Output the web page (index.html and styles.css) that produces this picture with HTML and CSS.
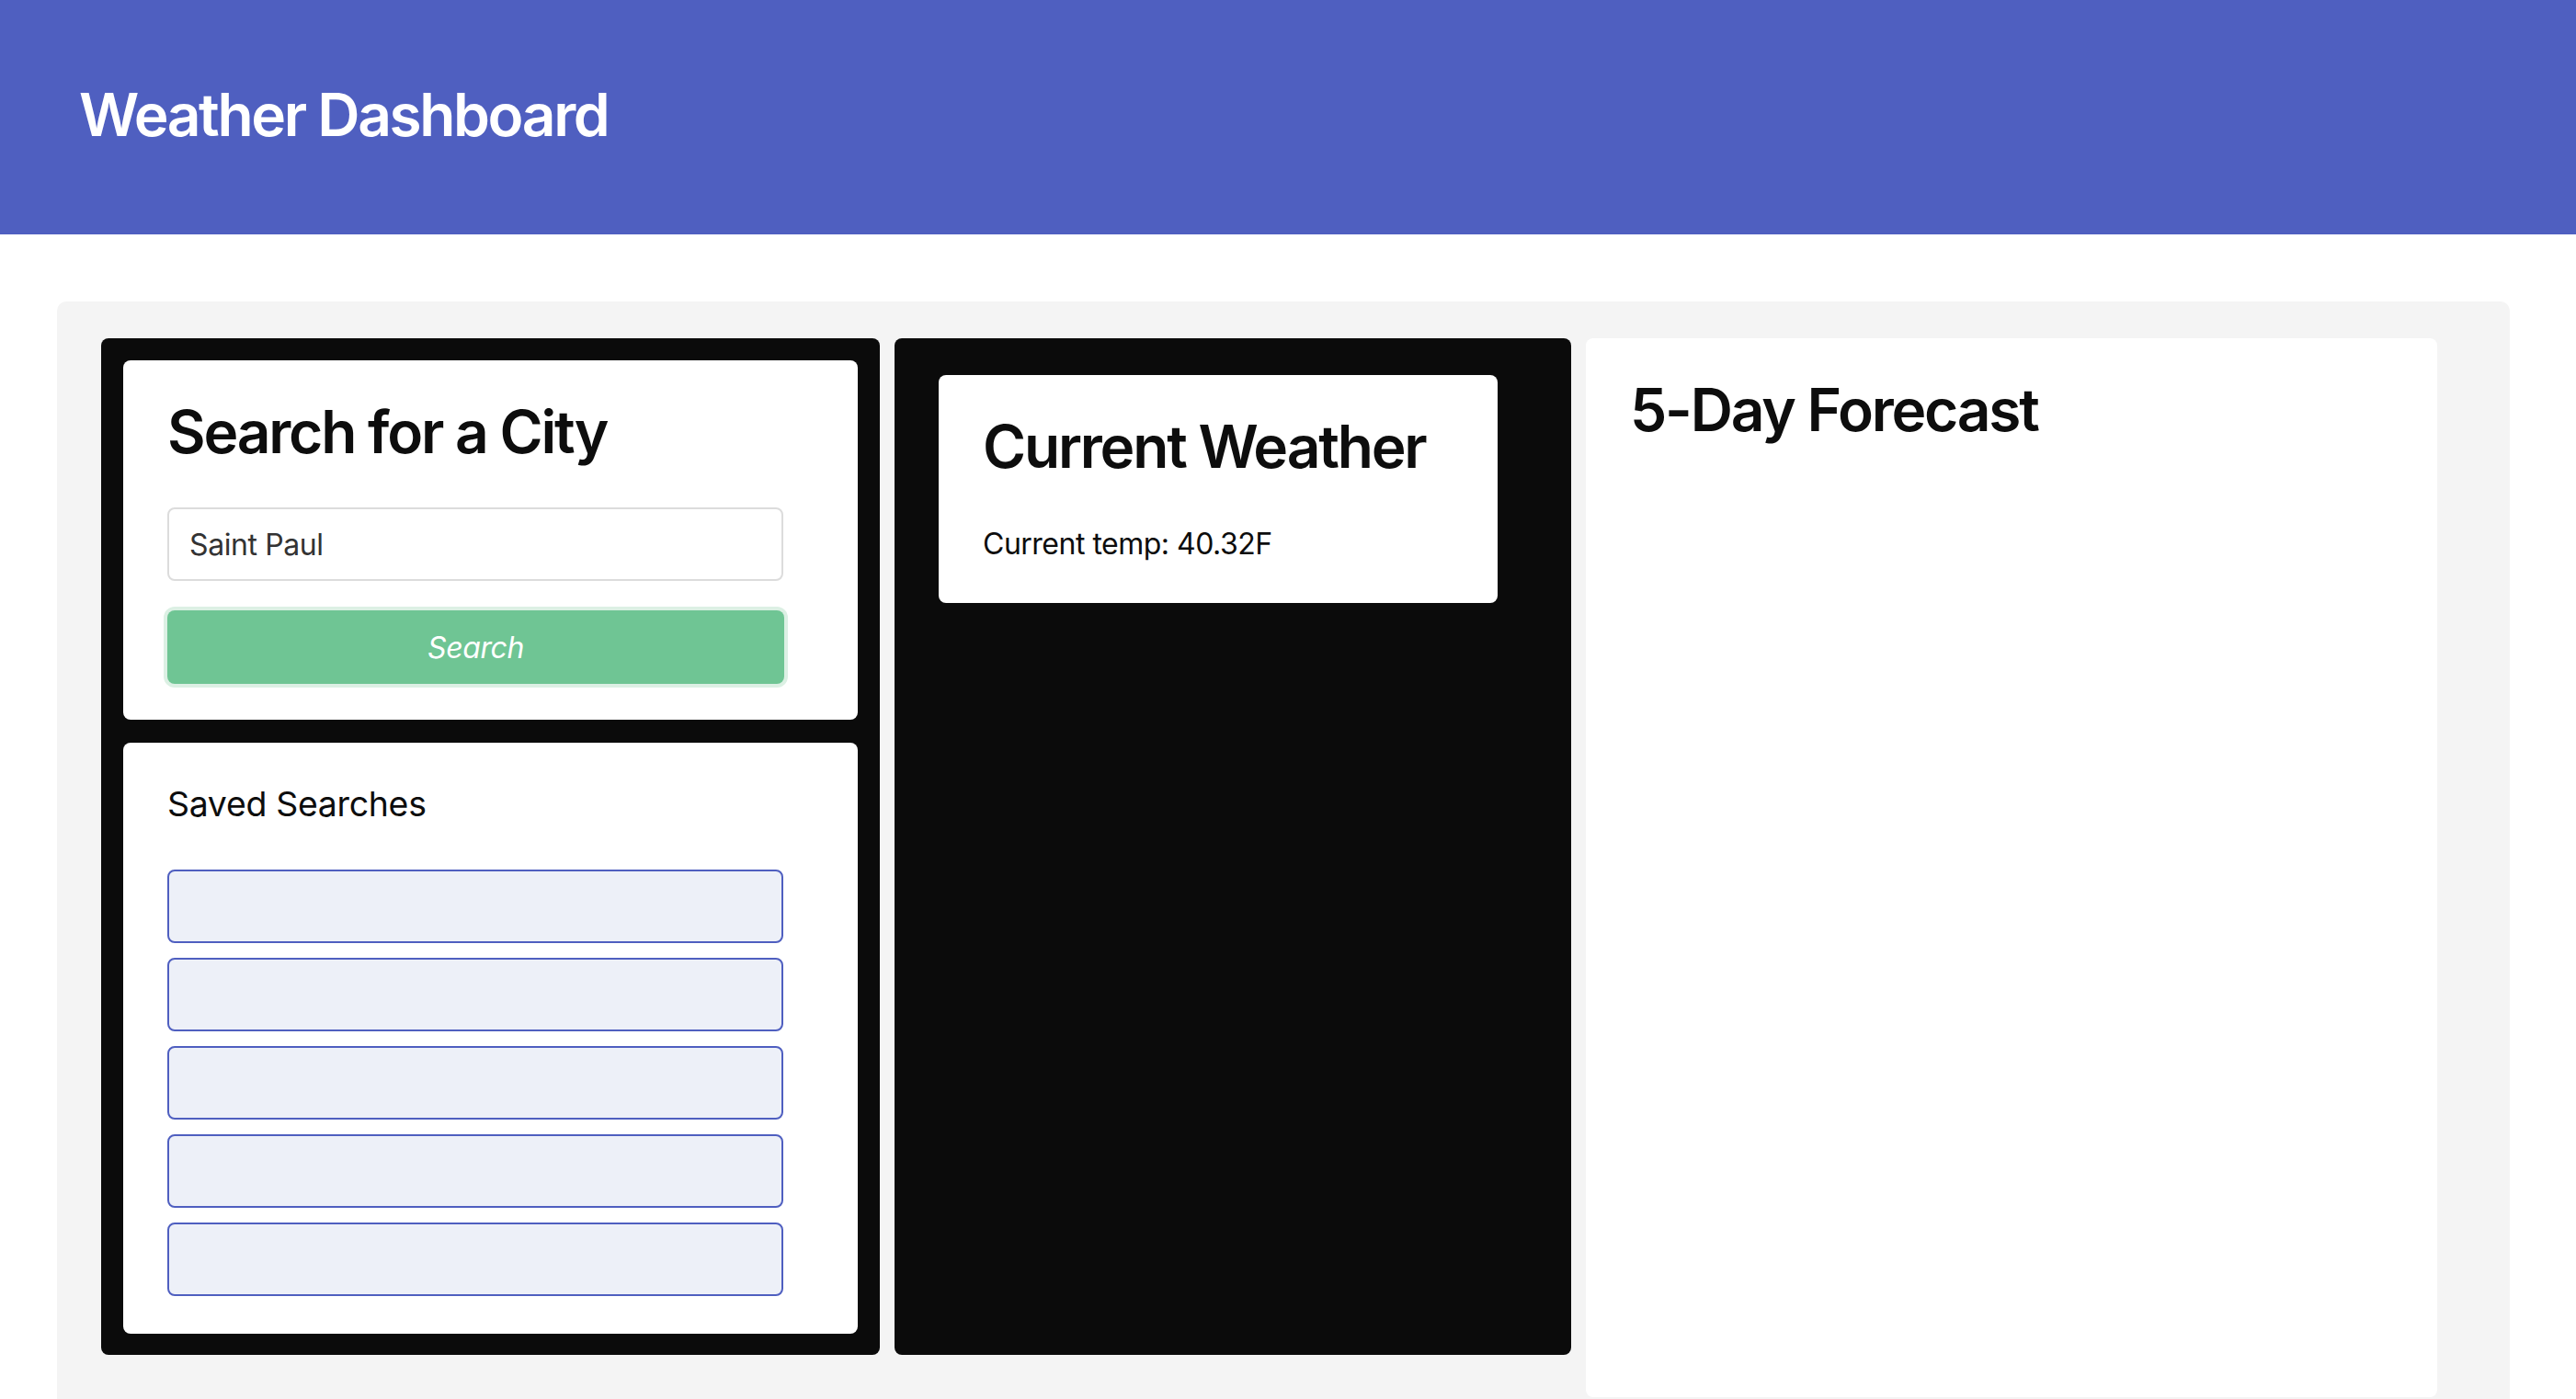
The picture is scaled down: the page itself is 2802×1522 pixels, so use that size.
FILE: index.html
```html
<!DOCTYPE html>
<html lang="en">
<head>
<meta charset="utf-8">
<title>Weather Dashboard</title>
<link rel="stylesheet" href="styles.css">
</head>
<body>
<header class="top-bar">
  <h1 class="app-title">Weather Dashboard</h1>
</header>
<main class="dashboard">
  <div class="dash-pair">
    <section class="col col-left">
      <div class="card search-card">
        <h1 class="card-title">Search for a City</h1>
        <input class="city-input" type="text" value="Saint Paul">
        <button class="search-btn" type="button">Search</button>
      </div>
      <div class="card saved-card">
        <h3 class="saved-title">Saved Searches</h3>
        <div class="saved-list">
          <button class="saved-item" type="button"></button>
          <button class="saved-item" type="button"></button>
          <button class="saved-item" type="button"></button>
          <button class="saved-item" type="button"></button>
          <button class="saved-item" type="button"></button>
        </div>
      </div>
    </section>
    <section class="col col-mid">
      <div class="card current-card">
        <h1 class="card-title">Current Weather</h1>
        <p class="current-temp">Current temp: 40.32F</p>
      </div>
    </section>
  </div>
  <section class="card forecast-card">
    <h1 class="card-title">5-Day Forecast</h1>
  </section>
</main>
</body>
</html>
```
FILE: styles.css
```css
* { box-sizing: border-box; }

body {
  margin: 0;
  background: #ffffff;
  font-family: "Inter", "Liberation Sans", sans-serif;
  color: #0d0d0d;
}

.top-bar {
  height: 255px;
  background: #4f5fc0;
  padding: 87px 0 0 86px;
}

.app-title {
  margin: 0;
  font-size: 64px;
  line-height: 76px;
  font-weight: 600;
  color: #ffffff;
  letter-spacing: -2.4px;
}

.dashboard {
  margin: 73px 72px 0 62px;
  background: #f4f4f4;
  border-radius: 10px;
  padding: 40px 79px 40px 48px;
  display: flex;
  align-items: flex-start;
  gap: 16px;
}

.dash-pair {
  display: flex;
  align-items: stretch;
  gap: 16px;
}

.col {
  background: #0b0b0b;
  border-radius: 8px;
}

.col-left {
  width: 847px;
  padding: 24px 24px 23px 24px;
  display: flex;
  flex-direction: column;
  gap: 25px;
}

.col-mid {
  width: 736px;
  padding: 40px 80px 0 48px;
}

.card {
  background: #ffffff;
  border-radius: 8px;
}

.card-title {
  margin: 0;
  font-size: 64px;
  line-height: 76px;
  font-weight: 600;
  letter-spacing: -2.2px;
}

.search-card {
  padding: 40px 48px 39px 48px;
  display: flex;
  flex-direction: column;
  align-items: flex-start;
}

.city-input {
  margin-top: 44px;
  width: 670px;
  height: 80px;
  border: 2px solid #dcdcdc;
  border-radius: 8px;
  padding: 0 22px;
  font-family: "Inter", "Liberation Sans", sans-serif;
  font-size: 32px;
  letter-spacing: -0.4px;
  color: #333333;
  background: #ffffff;
  outline: none;
}

.search-btn {
  margin-top: 32px;
  width: 671px;
  height: 80px;
  border: none;
  border-radius: 8px;
  background: #6fc594;
  box-shadow: 0 0 0 4px #dcf0e4;
  color: #ffffff;
  font-family: "Inter", "Liberation Sans", sans-serif;
  font-size: 32px;
  font-style: italic;
  letter-spacing: -0.4px;
  padding: 0;
}

.saved-card {
  padding: 44px 48px 41px 48px;
}

.saved-title {
  margin: 0;
  font-size: 37.44px;
  line-height: 45px;
  font-weight: 400;
  letter-spacing: -0.3px;
}

.saved-list {
  margin-top: 49px;
  display: flex;
  flex-direction: column;
  gap: 16px;
}

.saved-item {
  display: block;
  width: 670px;
  height: 80px;
  background: #edf0f8;
  border: 2px solid #4f5fc0;
  border-radius: 8px;
  padding: 0;
}

.current-card {
  padding: 40px 48px 45px 48px;
}

.current-temp {
  margin: 49px 0 0 0;
  font-size: 32px;
  line-height: 38px;
  letter-spacing: -0.5px;
}

.forecast-card {
  width: 926px;
  height: 1152px;
  padding: 40px 48px;
}
```
